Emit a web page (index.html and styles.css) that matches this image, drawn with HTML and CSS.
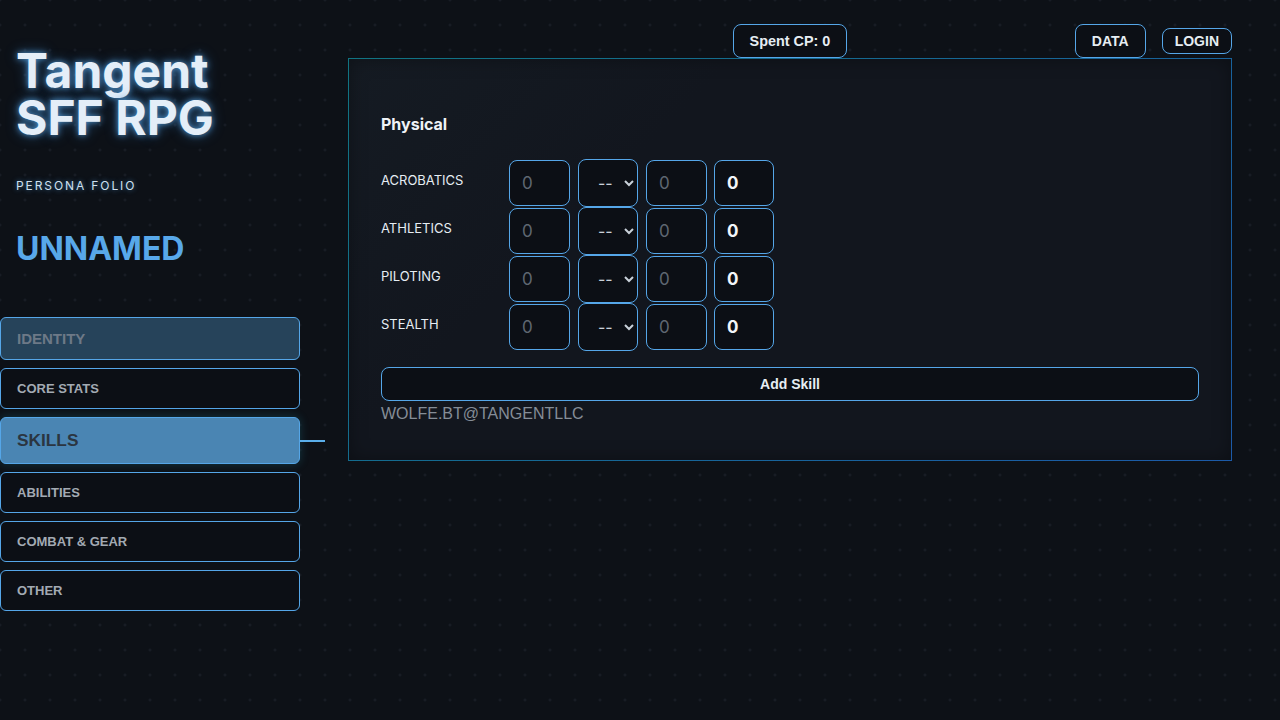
FILE: index.html
```html
<!DOCTYPE html>
<html lang="en">
<head>
<meta charset="utf-8">
<title>Tangent SFF RPG</title>
<link rel="stylesheet" href="styles.css">
</head>
<body>
<div class="page">
  <aside class="sidebar">
    <h1 class="title"><span class="title-line">Tangent</span><span class="title-line">SFF RPG</span></h1>
    <div class="subtitle">PERSONA FOLIO</div>
    <div class="char-name">UNNAMED</div>
    <nav class="nav">
      <button class="nav-btn nav-identity">IDENTITY</button>
      <button class="nav-btn">CORE STATS</button>
      <button class="nav-btn nav-active">SKILLS</button>
      <button class="nav-btn">ABILITIES</button>
      <button class="nav-btn">COMBAT &amp; GEAR</button>
      <button class="nav-btn">OTHER</button>
    </nav>
  </aside>
  <main class="main">
    <header class="topbar">
      <div class="topbar-left"></div>
      <button class="top-btn top-btn-cp">Spent CP: 0</button>
      <div class="topbar-right">
        <button class="top-btn">DATA</button>
        <button class="top-btn top-btn-small">LOGIN</button>
      </div>
    </header>
    <section class="panel">
      <h3 class="section-title">Physical</h3>
      <div class="skill-rows">
        <div class="skill-row">
          <span class="skill-label">ACROBATICS</span>
          <input class="cell" placeholder="0">
          <select class="cell-select"><option>--</option></select>
          <input class="cell" placeholder="0">
          <input class="cell cell-total" value="0">
        </div>
        <div class="skill-row">
          <span class="skill-label">ATHLETICS</span>
          <input class="cell" placeholder="0">
          <select class="cell-select"><option>--</option></select>
          <input class="cell" placeholder="0">
          <input class="cell cell-total" value="0">
        </div>
        <div class="skill-row">
          <span class="skill-label">PILOTING</span>
          <input class="cell" placeholder="0">
          <select class="cell-select"><option>--</option></select>
          <input class="cell" placeholder="0">
          <input class="cell cell-total" value="0">
        </div>
        <div class="skill-row">
          <span class="skill-label">STEALTH</span>
          <input class="cell" placeholder="0">
          <select class="cell-select"><option>--</option></select>
          <input class="cell" placeholder="0">
          <input class="cell cell-total" value="0">
        </div>
      </div>
      <button class="add-btn">Add Skill</button>
      <div class="footer-note">WOLFE.BT@TANGENTLLC</div>
    </section>
  </main>
</div>
</body>
</html>
```
FILE: styles.css
```css
* { box-sizing: border-box; }

html, body {
  margin: 0;
  padding: 0;
}

body {
  width: 1280px;
  height: 720px;
  overflow: hidden;
  background-color: #0d1117;
  background-image: radial-gradient(circle, #1b2029 1px, transparent 1.2px);
  background-size: 25px 25px;
  background-position: -12.5px -12.5px;
  font-family: Inter, "Liberation Sans", sans-serif;
  color: #e6edf3;
}

.page {
  display: flex;
  gap: 48px;
  padding-right: 48px;
}

/* Sidebar */
.sidebar {
  width: 300px;
  flex: none;
  display: flex;
  flex-direction: column;
}

.title {
  margin: 47px 0 0;
  padding-left: 16px;
  font-family: Inter, sans-serif;
  font-size: 48px;
  font-weight: 700;
  color: #e4eef8;
  text-shadow: 0 0 6px rgba(90, 170, 235, 0.85), 0 0 14px rgba(60, 140, 220, 0.45);
}

.title-line {
  display: block;
  line-height: 47px;
}

.subtitle {
  margin-top: 37px;
  padding-left: 16px;
  font-size: 12px;
  line-height: 16px;
  font-weight: 400;
  letter-spacing: 1.9px;
  color: #cfe0f0;
  text-shadow: 0 0 5px rgba(80, 160, 230, 0.7);
}

.char-name {
  margin-top: 35px;
  padding-left: 16px;
  font-size: 32px;
  line-height: 40px;
  font-weight: 700;
  color: #58a8ea;
}

.nav {
  margin-top: 48px;
  display: flex;
  flex-direction: column;
  gap: 8px;
}

.nav-btn {
  position: relative;
  display: block;
  width: 300px;
  text-align: left;
  padding: 12px 16px;
  font-family: "Liberation Sans", Arial, sans-serif;
  font-size: 13px;
  line-height: 15px;
  font-weight: 700;
  color: #a3aab3;
  background: #0c0f15;
  border: 1px solid #55a6e8;
  border-radius: 6px;
}

.nav-identity {
  font-size: 15px;
  line-height: 17px;
  color: #6d7987;
  background: #26435a;
}

.nav-active {
  font-size: 17.3px;
  line-height: 21px;
  color: #2b3541;
  background: #4a85b3;
  box-shadow: 0 0 10px rgba(40, 170, 200, 0.25);
}

.nav-active::after {
  content: "";
  position: absolute;
  left: 299px;
  top: 22px;
  width: 25px;
  height: 2px;
  background: #5aaeea;
}

/* Main */
.main {
  width: 884px;
  flex: none;
  display: flex;
  flex-direction: column;
}

.topbar {
  display: grid;
  grid-template-columns: 1fr auto 1fr;
  align-items: center;
  padding-top: 24px;
}

.topbar-right {
  display: flex;
  justify-content: flex-end;
  align-items: center;
  gap: 16px;
}

.top-btn {
  font-family: "Liberation Sans", Arial, sans-serif;
  font-size: 14px;
  line-height: 16px;
  font-weight: 700;
  color: #e6edf3;
  background: #0c0f15;
  border: 1px solid #55a6e8;
  border-radius: 8px;
  padding: 8px 16px;
}

.top-btn-cp {
  font-size: 14.4px;
}

.top-btn-small {
  padding: 4px 12px;
}

.panel {
  border: 1px solid;
  border-image: linear-gradient(135deg, #107482, #1c5aa8) 1;
  background: linear-gradient(135deg, #151b23 0%, #12161e 30%, #12161e 100%);
  box-shadow: inset 0 0 18px rgba(0, 0, 0, 0.35);
  padding: 32px 32px 37px;
}

.section-title {
  margin: 23px 0 25px;
  font-size: 16px;
  line-height: 20px;
  font-weight: 700;
  color: #eef2f6;
}

.skill-rows {
  display: flex;
  flex-direction: column;
}

.skill-row {
  display: grid;
  grid-template-columns: 120px 61px 60px 60px 60px;
  column-gap: 8px;
  height: 48px;
  align-items: start;
}

.skill-label {
  padding-top: 13px;
  font-size: 13px;
  line-height: 16px;
  color: #e6edf3;
}

.cell {
  width: 61px;
  height: 46px;
  margin-top: 1px;
  padding: 0 12px;
  font-family: Inter, sans-serif;
  font-size: 17px;
  color: #e6edf3;
  background: #0c0f15;
  border: 1px solid #55a6e8;
  border-radius: 8px;
  outline: none;
}

.cell::placeholder {
  color: #5f6771;
}

.cell-total {
  width: 60px;
  font-weight: 700;
  color: #f3f6f9;
}

.cell-select {
  width: 60px;
  height: 48px;
  padding: 0 4px 0 15px;
  font-family: Inter, sans-serif;
  font-size: 16px;
  color: #c9d1d9;
  background: #0c0f15;
  border: 1px solid #55a6e8;
  border-radius: 8px;
  color-scheme: dark;
  outline: none;
}

.add-btn {
  display: block;
  width: 100%;
  margin-top: 16px;
  height: 34px;
  font-family: "Liberation Sans", Arial, sans-serif;
  font-size: 14px;
  font-weight: 700;
  color: #e6edf3;
  background: #0c0f15;
  border: 1px solid #55a6e8;
  border-radius: 8px;
}

.footer-note {
  margin-top: 4px;
  font-family: "Liberation Sans", Arial, sans-serif;
  font-size: 16px;
  line-height: 18px;
  color: #858d97;
}
```
